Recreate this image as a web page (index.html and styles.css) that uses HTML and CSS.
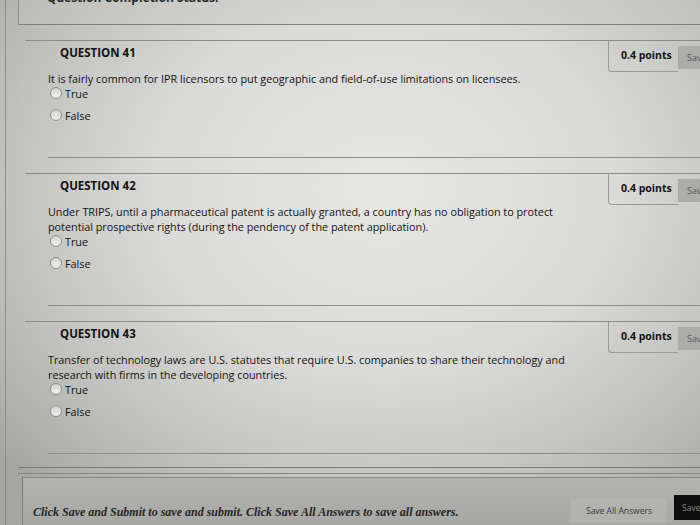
FILE: index.html
```html
<!DOCTYPE html>
<html lang="en">
<head>
<meta charset="utf-8">
<title>Test</title>
<link rel="stylesheet" href="styles.css">
</head>
<body>
<div class="page">
  <div class="status"><span class="status-text">&#8226; Question Completion Status:</span></div>

  <div class="questions">
    <div class="question">
      <div class="q-head">
        <h3 class="q-title">QUESTION 41</h3>
        <div class="q-side">
          <div class="points">0.4 points</div>
          <button class="save-answer">Save Answer</button>
        </div>
      </div>
      <div class="q-body">
        <p class="q-text">It is fairly common for IPR licensors to put geographic and field-of-use limitations on licensees.</p>
        <label class="opt"><span class="radio"></span>True</label>
        <label class="opt"><span class="radio"></span>False</label>
      </div>
      <div class="q-sep"></div>
    </div>

    <div class="question">
      <div class="q-head">
        <h3 class="q-title">QUESTION 42</h3>
        <div class="q-side">
          <div class="points">0.4 points</div>
          <button class="save-answer">Save Answer</button>
        </div>
      </div>
      <div class="q-body">
        <p class="q-text">Under TRIPS, until a pharmaceutical patent is actually granted, a country has no obligation to protect<br>potential prospective rights (during the pendency of the patent application).</p>
        <label class="opt"><span class="radio"></span>True</label>
        <label class="opt"><span class="radio"></span>False</label>
      </div>
      <div class="q-sep"></div>
    </div>

    <div class="question last">
      <div class="q-head">
        <h3 class="q-title">QUESTION 43</h3>
        <div class="q-side">
          <div class="points">0.4 points</div>
          <button class="save-answer">Save Answer</button>
        </div>
      </div>
      <div class="q-body">
        <p class="q-text">Transfer of technology laws are U.S. statutes that require U.S. companies to share their technology and<br>research with firms in the developing countries.</p>
        <label class="opt"><span class="radio"></span>True</label>
        <label class="opt"><span class="radio"></span>False</label>
      </div>
      <div class="q-sep"></div>
    </div>
  </div>

  <div class="list-end"><div class="list-end-a"></div><div class="list-end-b"></div></div>

  <div class="footer">
    <p class="footer-text">Click Save and Submit to save and submit. Click Save All Answers to save all answers.</p>
    <div class="footer-btns">
      <button class="btn-all">Save All Answers</button>
      <button class="btn-submit">Save and Submit</button>
    </div>
  </div>
</div>
</body>
</html>
```

FILE: styles.css
```css
html, body {
  margin: 0;
  padding: 0;
  width: 700px;
  height: 525px;
  overflow: hidden;
}

body {
  font-family: "Open Sans", "Liberation Sans", sans-serif;
  color: #151515;
  background:
    radial-gradient(ellipse 72% 78% at 55% 36%, #e6e6e4 0%, #dadad8 45%, #c1c1bd 75%, #a6a6a2 100%);
}

.page {
  width: 760px;
  height: 525px;
  margin-left: 5px;
  border-left: 1px solid #8d8d89;
  display: flex;
  flex-direction: column;
}

.status {
  margin-left: 12px;
  height: 24px;
  border-left: 1px solid #8a8a86;
  border-bottom: 1px solid #7e7e7a;
  background: rgba(200, 200, 196, 0.35);
  overflow: hidden;
}

.status-text {
  display: block;
  margin-top: -11px;
  padding-left: 20px;
  font-size: 12px;
  font-weight: 700;
  color: #2a2a2a;
}

.questions {
  margin-top: 15px;
  margin-left: 19px;
}

.question {
  border-top: 1px solid #8c8c88;
  margin-bottom: 15px;
}

.question.last {
  margin-bottom: 0;
}

.q-head {
  display: flex;
  justify-content: space-between;
  align-items: flex-start;
  height: 30px;
}

.q-title {
  margin: 0;
  padding: 4px 0 0 35px;
  font-size: 11.5px;
  line-height: 16px;
  font-weight: 700;
  color: #121212;
}

.q-side {
  display: flex;
  align-items: flex-start;
  margin-right: 28px;
}

.points {
  width: 70px;
  height: 31px;
  box-sizing: border-box;
  border-left: 1px solid #9a9a96;
  border-bottom: 1px solid #9a9a96;
  border-bottom-left-radius: 4px;
  padding: 6px 0 0 12px;
  font-size: 10.5px;
  line-height: 16px;
  font-weight: 700;
  color: #121212;
}

.save-answer {
  margin-top: 5px;
  width: 60px;
  height: 23px;
  border: 0;
  background: #acaca8;
  color: #5a5a58;
  font-family: "Open Sans", "Liberation Sans", sans-serif;
  font-size: 9px;
  text-align: left;
  padding: 0 0 0 9px;
  white-space: nowrap;
}

.q-body {
  padding-left: 23px;
}

.q-text {
  margin: 0;
  font-size: 10.8px;
  line-height: 15px;
  color: #131313;
}

.opt {
  display: flex;
  align-items: center;
  height: 14px;
  margin-bottom: 8px;
  padding-left: 2px;
  font-size: 10.8px;
  color: #131313;
}

.radio {
  width: 10px;
  height: 10px;
  border: 1px solid #8e8e8a;
  border-radius: 50%;
  background: linear-gradient(#d4d4d2, #f0f0ee);
  margin-right: 3px;
}

.q-sep {
  margin-left: 23px;
  margin-top: 35px;
  border-top: 1px solid #8e8e8a;
}

.list-end {
  margin-top: 13px;
  margin-left: 12px;
}

.list-end-a {
  border-top: 1px solid #7c7c78;
  height: 5px;
  border-bottom: 1px solid #858581;
}

.list-end-b {
  height: 3px;
}

.footer {
  flex: 1;
  margin-left: 16px;
  border-left: 1px solid #7c7c78;
  border-top: 1px solid #8a8a86;
  background: linear-gradient(#b2b2ae, #a7a7a3);
  display: flex;
  align-items: flex-end;
  justify-content: space-between;
  padding-bottom: 2px;
}

.footer-text {
  margin: 0 0 3px 10px;
  font-family: "Liberation Serif", "Times New Roman", serif;
  font-style: italic;
  font-weight: 700;
  font-size: 12px;
  color: #262626;
}

.footer-btns {
  display: flex;
  align-items: flex-end;
  gap: 7px;
  width: 195px;
}

.btn-all {
  width: 96px;
  height: 25px;
  border: 0;
  background: #b3b3ae;
  color: #3a3a38;
  font-family: "Open Sans", "Liberation Sans", sans-serif;
  font-size: 8.5px;
  padding: 0;
}

.btn-submit {
  width: 90px;
  height: 25px;
  margin-bottom: 3px;
  border: 0;
  background: #0e0e0e;
  color: #8a8a86;
  font-family: "Open Sans", "Liberation Sans", sans-serif;
  font-size: 8.5px;
  text-align: left;
  padding: 0 0 0 8px;
  white-space: nowrap;
}
```
